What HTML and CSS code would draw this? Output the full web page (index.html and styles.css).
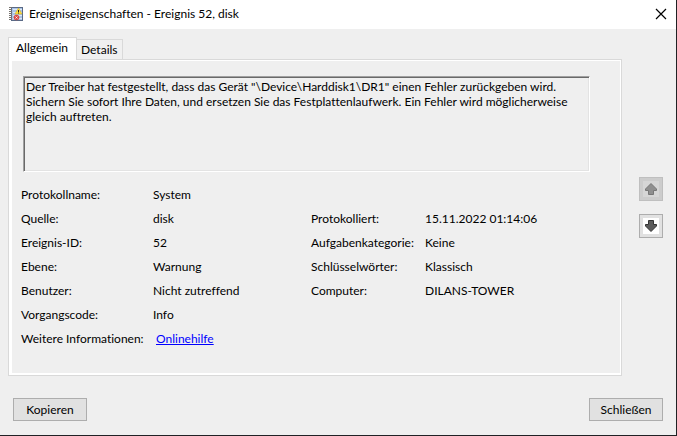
FILE: index.html
```html
<!DOCTYPE html>
<html lang="de">
<head>
<meta charset="utf-8">
<meta name="viewport" content="width=device-width, initial-scale=1">
<title>Ereigniseigenschaften - Ereignis 52, disk</title>
<link rel="stylesheet" href="styles.css">
</head>
<body>
<main class="window">
  <header class="titlebar">
    <svg class="app-icon" width="16" height="16" viewBox="0 0 16 16" aria-hidden="true">
      <rect x="2" y="1" width="12" height="14" fill="#5a6a86"/>
      <rect x="3" y="2" width="10" height="12" fill="#a9c3e6"/>
      <path d="M4 3.500h9M4 6.500h9M4 9.500h9M4 12.500h9" stroke="#dce8f7"/>
      <path d="M0 1.500h3M0 3.500h3M0 5.500h3M0 7.500h3M0 9.500h3M0 11.500h3M0 13.500h3" stroke="#77736f"/>
      <path d="M9.500 2L13 8H6Z" fill="#ffdf3c" stroke="#d5ae22" stroke-width=".6"/>
      <path d="M9.500 4v2M9.500 6.500v1" stroke="#222"/>
      <circle cx="7.500" cy="11.500" r="2.800" fill="#d84a46"/>
      <path d="M6.500 10.500l2 2M8.500 10.500l-2 2" stroke="#fff" stroke-width=".8"/>
    </svg>
    <h1 class="title">Ereigniseigenschaften - Ereignis 52, disk</h1>
    <button class="close" type="button" aria-label="Fenster schließen">
      <svg width="12" height="12" viewBox="0 0 12 12" aria-hidden="true"><path d="M1 1l10 10M11 1L1 11" stroke="#000" stroke-width="1.200"/></svg>
    </button>
  </header>
  <div class="content">
    <section class="sheet">
      <div class="tabs" role="tablist">
        <button class="tab tab-active" type="button" role="tab" aria-selected="true">Allgemein</button>
        <button class="tab" type="button" role="tab" aria-selected="false">Details</button>
      </div>
      <div class="panel" role="tabpanel">
        <div class="page">
          <textarea class="message" readonly aria-label="Beschreibung">Der Treiber hat festgestellt, dass das Gerät "\Device\Harddisk1\DR1" einen Fehler zurückgeben wird. Sichern Sie sofort Ihre Daten, und ersetzen Sie das Festplattenlaufwerk. Ein Fehler wird möglicherweise gleich auftreten.</textarea>
          <dl class="fields">
            <dt>Protokollname:</dt><dd class="wide">System</dd>
            <dt>Quelle:</dt><dd>disk</dd><dt>Protokolliert:</dt><dd>15.11.2022 01:14:06</dd>
            <dt>Ereignis-ID:</dt><dd>52</dd><dt>Aufgabenkategorie:</dt><dd>Keine</dd>
            <dt>Ebene:</dt><dd>Warnung</dd><dt>Schlüsselwörter:</dt><dd>Klassisch</dd>
            <dt>Benutzer:</dt><dd>Nicht zutreffend</dd><dt>Computer:</dt><dd>DILANS-TOWER</dd>
            <dt>Vorgangscode:</dt><dd class="wide">Info</dd>
            <dt>Weitere Informationen:</dt><dd class="wide help"><a href="#hilfe">Onlinehilfe</a></dd>
          </dl>
        </div>
      </div>
    </section>
    <nav class="arrows">
      <button class="arrow" type="button" disabled aria-label="Vorheriges Ereignis">
        <svg width="16" height="16" viewBox="0 0 16 16" aria-hidden="true"><rect width="16" height="16" fill="#d6d6d6"/><path d="M8 2.500L13.500 8V9.500H10.500V13.500H5.500V9.500H2.500V8Z" fill="#8f8f8f" stroke="#777"/></svg>
      </button>
      <button class="arrow" type="button" aria-label="Nächstes Ereignis">
        <svg width="16" height="16" viewBox="0 0 16 16" aria-hidden="true"><rect width="16" height="16" fill="#fff"/><path d="M8 13.500L13.500 8V6.500H10.500V2.500H5.500V6.500H2.500V8Z" fill="#5c5c5c" stroke="#333"/></svg>
      </button>
    </nav>
  </div>
  <footer class="actions">
    <button class="action" type="button">Kopieren</button>
    <button class="action" type="button">Schließen</button>
  </footer>
</main>
</body>
</html>
```
FILE: styles.css
```css
* { box-sizing: border-box; }

body {
  margin: 0;
  background: #efefef;
  color: #000;
  font: 12px/16px "Segoe UI", Lato, "Open Sans", sans-serif;
  font-variant-ligatures: none;
}

button, textarea {
  font: inherit;
  font-variant-ligatures: none;
  color: inherit;
  border-radius: 0;
}

.window {
  display: flex;
  flex-direction: column;
  min-height: 100vh;
  border: solid #202124;
  border-width: 0 1px 1px 0;
}

.titlebar {
  display: flex;
  align-items: center;
  height: 29px;
  padding: 0 9px 2px;
  background: #fff;
}

.title { flex: 1; margin: 0 0 0 4px; font-size: 12px; font-weight: 400; }

.close {
  display: flex;
  padding: 0;
  border: 0;
  background: none;
}

.content { display: flex; flex: 1; gap: 17px; padding: 8px 13px 0 8px; }

.sheet { display: flex; flex: 1; flex-direction: column; min-width: 0; }

.tabs { display: flex; align-items: flex-end; height: 22px; }

.tab {
  height: 20px;
  padding: 0 4px;
  border: 1px solid #d9d9d9;
  border-width: 1px 1px 0 0;
  background: #f0f0f0;
}

.tab-active {
  position: relative;
  height: 23px;
  margin-bottom: -1px;
  padding: 0 8px 2px 7px;
  border-left-width: 1px;
  background: #fff;
}

.panel {
  display: flex;
  flex: 1;
  padding: 1px 1px 2px 3px;
  border: 1px solid #d9d9d9;
  background: #fff;
}

.page { flex: 1; padding: 15px 30px 0 11px; background: #efefef; }

.message {
  display: block;
  width: 100%;
  height: 96px;
  padding: 2px;
  border: 1px solid;
  border-color: #a0a0a0 #fff #fff #a0a0a0;
  background: #efefef;
  box-shadow: inset 1px 1px #696969, inset -1px -1px #e3e3e3;
  line-height: 15px;
  outline: 0;
  overflow: hidden;
  resize: none;
}

.fields {
  display: grid;
  grid-template-columns: 132px 158px 114px 1fr;
  grid-auto-rows: 24px;
  align-items: center;
  margin: 11px 0 0 -2px;
  white-space: nowrap;
}

.fields dd { margin: 0; }
.fields .wide { grid-column: span 3; }
.fields .help { padding-left: 3px; }
.fields a { color: #00f; }

.arrows { display: flex; flex-direction: column; gap: 13px; padding-top: 140px; }

.arrow {
  display: grid;
  place-items: center;
  width: 24px;
  height: 24px;
  padding: 0;
  border: 1px solid #adadad;
  background: #e1e1e1;
}

.arrow:disabled { border-color: #bfbfbf; background: #ccc; }

.actions { display: flex; justify-content: space-between; padding: 22px 13px 14px; }

.action {
  width: 74px;
  height: 23px;
  padding: 0;
  border: 1px solid #adadad;
  background: #e1e1e1;
}
```
